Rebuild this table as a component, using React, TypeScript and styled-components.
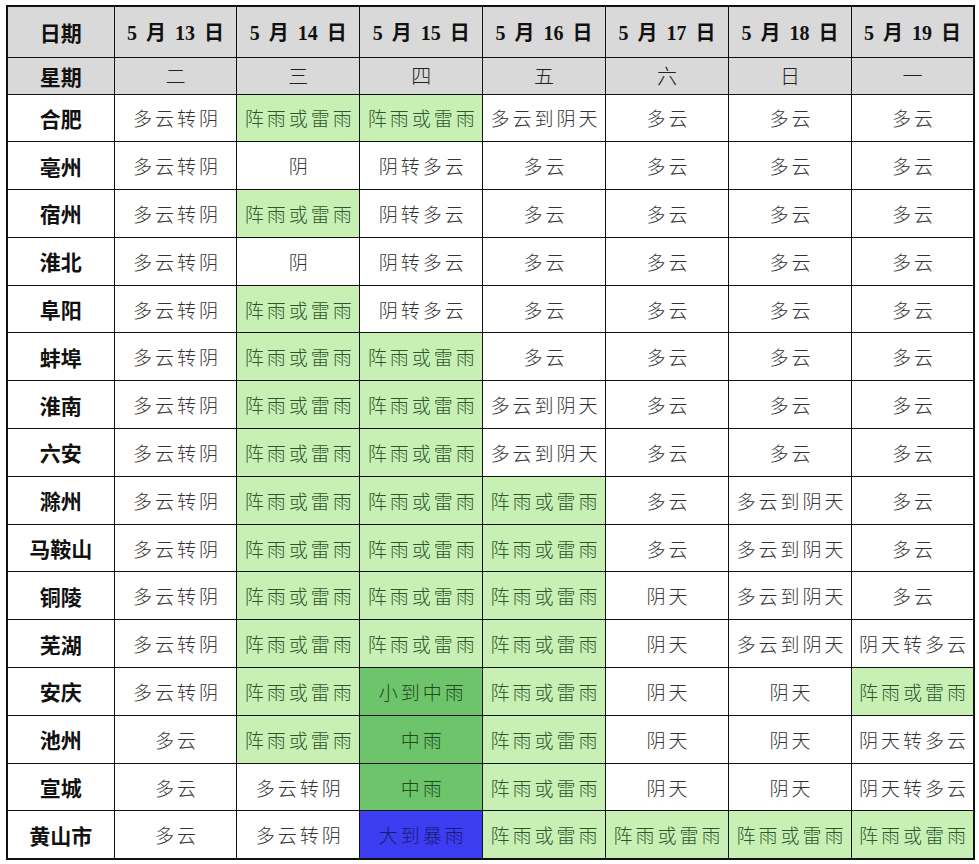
import React from "react";
import styled, { createGlobalStyle } from "styled-components";

const Global = createGlobalStyle`
  html, body { margin: 0; padding: 0; background: #ffffff; }
`;

const Page = styled.div`
  padding: 5px 0 0 6px;
  width: 979px;
  box-sizing: border-box;
`;

const Table = styled.table`
  border-collapse: collapse;
  table-layout: fixed;
  width: 967px;
  border: 2px solid #111;
`;

const Col = styled.col<{ $w: number }>`
  width: ${(p) => p.$w}px;
`;

const HeadRow = styled.tr<{ $h: number }>`
  height: ${(p) => p.$h}px;
  background: #d9d9d9;
`;

const Row = styled.tr`
  height: 47.8px;
`;

const base = `
  border: 1.5px solid #111;
  text-align: center;
  vertical-align: middle;
  padding: 0;
  white-space: nowrap;
  overflow: hidden;
`;

const HeadCell = styled.th<{ $serif?: boolean }>`
  ${base}
  font-family: ${(p) =>
    p.$serif
      ? `"Liberation Serif", "Noto Sans CJK SC", serif`
      : `"Noto Sans CJK SC", sans-serif`};
  font-weight: 700;
  font-size: ${(p) => (p.$serif ? "20px" : "21px")};
  word-spacing: ${(p) => (p.$serif ? "4px" : "0")};
  color: #111;
`;

const DayCell = styled.td`
  ${base}
  font-family: "Noto Sans CJK SC", sans-serif;
  font-weight: 300;
  font-size: 20px;
  color: #222;
`;

const CityCell = styled.td`
  ${base}
  font-family: "Noto Sans CJK SC", sans-serif;
  font-weight: 700;
  font-size: 21px;
  color: #111;
`;

type Tone = "w" | "g" | "m" | "b";

const bg: Record<Tone, string> = {
  w: "#ffffff",
  g: "#c8f0b4",
  m: "#6ec46a",
  b: "#3c3cf0",
};
const fg: Record<Tone, string> = {
  w: "#333333",
  g: "#2f552f",
  m: "#1f4a1f",
  b: "#1a1a70",
};

const WxCell = styled.td<{ $t: Tone }>`
  ${base}
  background: ${(p) => bg[p.$t]};
  color: ${(p) => fg[p.$t]};
  font-family: "Noto Sans CJK SC", sans-serif;
  font-weight: 300;
  font-size: 19px;
  letter-spacing: 3px;
  text-indent: 3px;
`;

const dates = ["13", "14", "15", "16", "17", "18", "19"];
const days = ["二", "三", "四", "五", "六", "日", "一"];

const Z = "阵雨或雷雨";
const D = "多云";
const DY = "多云转阴";
const DT = "多云到阴天";
const YZ = "阴转多云";
const YT = "阴天";
const YTZ = "阴天转多云";

const g = (s: string): [string, Tone] => [s, "g"];
const w = (s: string): [string, Tone] => [s, "w"];

const rows: [string, [string, Tone][]][] = [
  ["合肥", [w(DY), g(Z), g(Z), w(DT), w(D), w(D), w(D)]],
  ["亳州", [w(DY), w("阴"), w(YZ), w(D), w(D), w(D), w(D)]],
  ["宿州", [w(DY), g(Z), w(YZ), w(D), w(D), w(D), w(D)]],
  ["淮北", [w(DY), w("阴"), w(YZ), w(D), w(D), w(D), w(D)]],
  ["阜阳", [w(DY), g(Z), w(YZ), w(D), w(D), w(D), w(D)]],
  ["蚌埠", [w(DY), g(Z), g(Z), w(D), w(D), w(D), w(D)]],
  ["淮南", [w(DY), g(Z), g(Z), w(DT), w(D), w(D), w(D)]],
  ["六安", [w(DY), g(Z), g(Z), w(DT), w(D), w(D), w(D)]],
  ["滁州", [w(DY), g(Z), g(Z), g(Z), w(D), w(DT), w(D)]],
  ["马鞍山", [w(DY), g(Z), g(Z), g(Z), w(D), w(DT), w(D)]],
  ["铜陵", [w(DY), g(Z), g(Z), g(Z), w(YT), w(DT), w(D)]],
  ["芜湖", [w(DY), g(Z), g(Z), g(Z), w(YT), w(DT), w(YTZ)]],
  ["安庆", [w(DY), g(Z), ["小到中雨", "m"], g(Z), w(YT), w(YT), g(Z)]],
  ["池州", [w(D), g(Z), ["中雨", "m"], g(Z), w(YT), w(YT), w(YTZ)]],
  ["宣城", [w(D), w(DY), ["中雨", "m"], g(Z), w(YT), w(YT), w(YTZ)]],
  ["黄山市", [w(D), w(DY), ["大到暴雨", "b"], g(Z), g(Z), g(Z), g(Z)]],
];

export default function App() {
  return (
    <Page>
      <Global />
      <Table>
        <colgroup>
          <Col $w={107} />
          {dates.map((d) => (
            <Col key={d} $w={122.9} />
          ))}
        </colgroup>
        <thead>
          <HeadRow $h={51}>
            <HeadCell>日期</HeadCell>
            {dates.map((d) => (
              <HeadCell key={d} $serif>
                5 月 {d} 日
              </HeadCell>
            ))}
          </HeadRow>
          <HeadRow $h={37}>
            <HeadCell>星期</HeadCell>
            {days.map((d) => (
              <DayCell key={d}>{d}</DayCell>
            ))}
          </HeadRow>
        </thead>
        <tbody>
          {rows.map(([city, cells]) => (
            <Row key={city}>
              <CityCell>{city}</CityCell>
              {cells.map(([t, tone], i) => (
                <WxCell key={i} $t={tone}>
                  {t}
                </WxCell>
              ))}
            </Row>
          ))}
        </tbody>
      </Table>
    </Page>
  );
}
